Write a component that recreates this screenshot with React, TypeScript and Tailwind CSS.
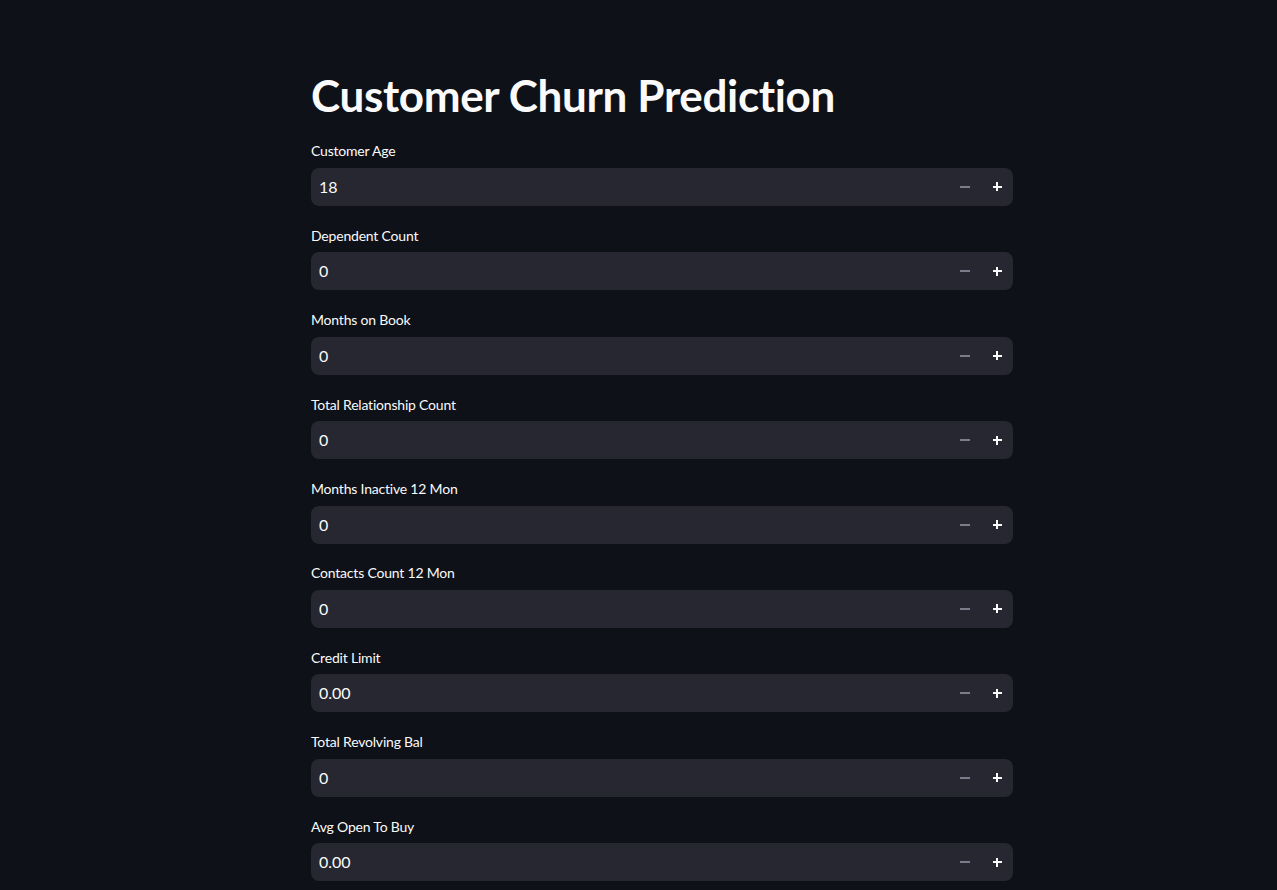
type Field = {
  label: string;
  value: string;
};

const fields: Field[] = [
  { label: "Customer Age", value: "18" },
  { label: "Dependent Count", value: "0" },
  { label: "Months on Book", value: "0" },
  { label: "Total Relationship Count", value: "0" },
  { label: "Months Inactive 12 Mon", value: "0" },
  { label: "Contacts Count 12 Mon", value: "0" },
  { label: "Credit Limit", value: "0.00" },
  { label: "Total Revolving Bal", value: "0" },
  { label: "Avg Open To Buy", value: "0.00" },
];

function NumberInput({ label, value }: Field) {
  return (
    <div className="mb-[17.45px]">
      <label className="flex h-6 items-center text-[14px] tracking-[-0.2px] text-[#fafafa]">
        {label}
      </label>
      <div className="mt-[5px] flex h-[38px] items-center rounded-lg bg-[#262730]">
        <span className="flex-1 pl-2 text-[16px] text-[#fafafa]">{value}</span>
        <button className="flex h-full w-8 items-center justify-center">
          <span className="h-[2px] w-[10px] bg-[#7b7b8b]" />
        </button>
        <button className="relative flex h-full w-8 items-center justify-center">
          <span className="absolute h-[2px] w-[9px] bg-[#fafafa]" />
          <span className="absolute h-[9px] w-[2px] bg-[#fafafa]" />
        </button>
      </div>
    </div>
  );
}

export default function App() {
  return (
    <div
      className="h-screen overflow-hidden bg-[#0e1117]"
      style={{ fontFamily: "Lato, 'Noto Sans', sans-serif" }}
    >
      <div className="ml-[311px] w-[702px] pt-[69px]">
        <h1 className="mb-[17px] text-[44px] font-bold leading-[1.2] tracking-[-0.35px] text-[#fafafa]">
          Customer Churn Prediction
        </h1>
        {fields.map((f) => (
          <NumberInput key={f.label} {...f} />
        ))}
      </div>
    </div>
  );
}
